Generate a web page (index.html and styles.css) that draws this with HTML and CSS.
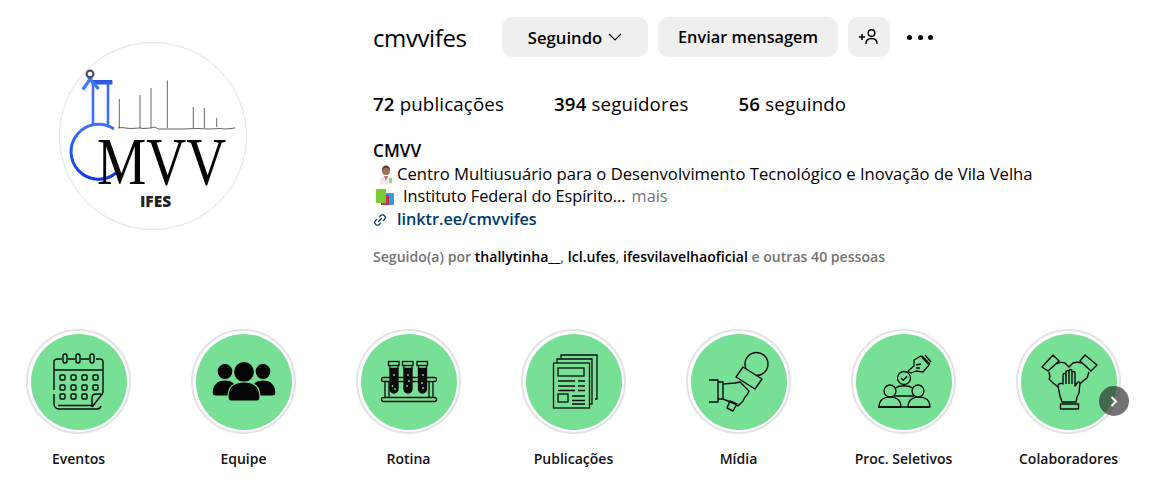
FILE: index.html
```html
<!DOCTYPE html>
<html lang="pt-BR">
<head>
<meta charset="utf-8">
<title>cmvvifes</title>
<link rel="stylesheet" href="styles.css">
</head>
<body>
<main class="page">
  <header class="profile">
    <div class="avatar-col">
      <div class="avatar">
        <svg viewBox="60 43 186 186" width="186" height="186">
          <defs><linearGradient id="fl" x1="0" y1="0" x2="0" y2="1"><stop offset="0" stop-color="#3f73f5"/><stop offset="1" stop-color="#1238e0"/></linearGradient></defs>
          <path d="M93 126V83M108 126V83" stroke="#3f6ff2" stroke-width="2.600" fill="none"/>
          <path d="M92 80.500h20v3.500H92z" fill="#2f5fe8" stroke="#2a52d8"/>
          <path d="M91.500 77L83 89.500M88.500 77l10 12" stroke="#3f7ae8" stroke-width="3.200" fill="none"/>
          <circle cx="90" cy="74" r="3.400" fill="none" stroke="#4a5068" stroke-width="2.200"/>
          <path d="M114 129A27.500 27.500 0 1 0 116 173" stroke="url(#fl)" stroke-width="3" fill="none"/>
          <path d="M118 128l4-.5 3 .5 6 .5 9-.5 3 .5 8-.5 4-1 3 2h25l14-.5 12 .5 10-.5 7 .5 9-1" stroke="#3f3f38" stroke-width=".8" fill="none"/>
          <path d="M119.300 128V99M140 128V95M151 128V88M167.300 128V80.500M193.300 128V107M204.300 128V108M216.700 127V118" stroke="#3f3f38" stroke-width=".8" fill="none"/>
          <text class="logo-mvv" transform="translate(97 184) scale(.815 1)">MVV</text>
          <text class="logo-ifes" x="155.500" y="207" text-anchor="middle">IFES</text>
        </svg>
      </div>
    </div>
    <section class="info">
      <div class="top-row">
        <h1 class="username">cmvvifes</h1>
        <button class="btn btn-follow">Seguindo
          <svg class="chev" viewBox="0 0 14 8" width="14" height="8"><path d="M1 1l6 6 6-6" fill="none" stroke="#000" stroke-width="1.200"/></svg>
        </button>
        <button class="btn btn-msg">Enviar mensagem</button>
        <button class="btn btn-add" aria-label="Adicionar">
          <svg viewBox="0 0 20 18" width="20" height="18"><path d="M0 9h6M3 6v6" stroke="#000" stroke-width="1.500"/><circle cx="12.500" cy="5" r="3.300" fill="none" stroke="#000" stroke-width="1.400"/><path d="M6.900 16c0-4 2.400-5.500 5.600-5.500s5.600 1.500 5.600 5.500" fill="none" stroke="#000" stroke-width="1.400"/></svg>
        </button>
        <div class="dots"><span></span><span></span><span></span></div>
      </div>
      <ul class="stats">
        <li><b>72</b> publicações</li>
        <li><b>394</b> seguidores</li>
        <li><b>56</b> seguindo</li>
      </ul>
      <div class="bio">
        <div class="bio-name">CMVV</div>
        <div class="bio-line">
          <svg class="emoji" viewBox="0 0 20 20" width="20" height="20"><path d="M4 20c0-6 2-8 6-8s6 2 6 8z" fill="#e9e9ee"/><path d="M8 12l2 5 2-5z" fill="#c56b7a"/><circle cx="10" cy="7" r="4" fill="#a06f58"/><path d="M5.800 7c0-4 2-5.500 4.200-5.500S14.200 3 14.200 7c-1-2.500-3-3-4.200-3S6.800 4.500 5.800 7z" fill="#5a4030"/><rect x="13" y="14" width="3" height="5" fill="#9fd46b"/></svg>
          <span>Centro Multiusuário para o Desenvolvimento Tecnológico e Inovação de Vila Velha</span>
        </div>
        <div class="bio-line bio-line-inst">
          <svg class="emoji emoji-books" viewBox="0 0 20 20" width="20" height="20"><rect x="9" y="6" width="10" height="12" rx="1" fill="#2f9be0"/><rect x="6" y="8" width="8" height="10" fill="#c0304f"/><rect x="1" y="2" width="10" height="14" rx="1" fill="#7cc832"/></svg>
          <span>Instituto Federal do Espírito...</span>
          <span class="more">mais</span>
        </div>
        <div class="bio-link">
          <svg class="link-icon" viewBox="0 0 14 14" width="14" height="14"><path d="M5.500 8.500l3-3M6.500 3.800l1.300-1.300a2.700 2.700 0 0 1 3.800 3.800L10.200 7.600M7.500 10.200l-1.300 1.300a2.700 2.700 0 0 1-3.800-3.800L3.800 6.400" fill="none" stroke="#00376b" stroke-width="1.200" stroke-linecap="round"/></svg>
          <span>linktr.ee/cmvvifes</span>
        </div>
      </div>
      <p class="followed">Seguido(a) por <b>thallytinha__</b>, <b>lcl.ufes</b>, <b>ifesvilavelhaoficial</b> e outras 40 pessoas</p>
    </section>
  </header>

  <section class="highlights">
    <div class="hl">
      <div class="ring"><div class="disc">
        <svg viewBox="0 0 96 96" width="96" height="96"><g fill="none" stroke="#0b0b0b" stroke-width="1.400">
          <path d="M31 25h-5a3 3 0 0 0-3 3v28M23 60v10a5 5 0 0 0 5 5H66a4 4 0 0 0 4-3M37 25h7M50 25h8M65 25h4a3 3 0 0 1 3 3v31M27 71.500H61"/>
          <path d="M23 36h49M72 59L61 73M72 60h-7q-4 0-4 4v9"/>
          <rect x="32" y="20" width="4" height="9" rx="2"/><rect x="45" y="20" width="4" height="9" rx="2"/><rect x="59" y="20" width="4" height="9" rx="2"/>
          <rect x="29" y="41" width="5" height="5" rx="1"/><rect x="40" y="41" width="5" height="5" rx="1"/><rect x="51" y="41" width="5" height="5" rx="1"/><rect x="62" y="41" width="5" height="5" rx="1"/>
          <rect x="29" y="51" width="5" height="5" rx="1"/><rect x="40" y="51" width="5" height="5" rx="1"/><rect x="51" y="51" width="5" height="5" rx="1"/><rect x="62" y="51" width="5" height="5" rx="1"/>
          <rect x="29" y="60" width="5" height="5" rx="1"/><rect x="40" y="60" width="5" height="5" rx="1"/><rect x="51" y="60" width="5" height="5" rx="1"/>
        </g></svg>
      </div></div>
      <span class="label">Eventos</span>
    </div>
    <div class="hl">
      <div class="ring"><div class="disc">
        <svg viewBox="0 0 96 96" width="96" height="96"><g fill="#050505" stroke="#77e096" stroke-width="1.200">
          <circle cx="29" cy="37.500" r="8"/><circle cx="67" cy="37.500" r="8"/>
          <path d="M16 59c0-8 5-13 13-13 8 0 13 5 13 13 0 2-1 3-3 3H19c-2 0-3-1-3-3z"/>
          <path d="M54 59c0-8 5-13 13-13 8 0 13 5 13 13 0 2-1 3-3 3H57c-2 0-3-1-3-3z"/>
          <circle cx="48" cy="38" r="10.500"/>
          <path d="M32 63c0-10 6-15 16-15s16 5 16 15c0 3-1 4-3 4H35c-2 0-3-1-3-4z"/>
        </g></svg>
      </div></div>
      <span class="label">Equipe</span>
    </div>
    <div class="hl">
      <div class="ring"><div class="disc">
        <svg viewBox="0 0 96 96" width="96" height="96"><g fill="none" stroke="#0b0b0b" stroke-width="1.300">
          <rect x="20.500" y="43.500" width="55" height="4" rx="2"/><rect x="20.500" y="63.500" width="55" height="4" rx="2"/>
          <path d="M24 47.500v16M28 47.500v16M68 47.500v16M72 47.500v16"/>
          <rect x="27.500" y="27.500" width="10.500" height="4"/><rect x="41.500" y="27.500" width="10.500" height="4"/><rect x="56" y="27.500" width="10.500" height="4"/>
          <path d="M29 31.500v3h8v-3M43 31.500v3h8v-3M57.500 31.500v3h8v-3" />
          <g fill="#0b0b0b"><path d="M29 35h8v20a4 4 0 0 1-8 0z"/><path d="M43 35h8v20a4 4 0 0 1-8 0z"/><path d="M57.500 35h8v20a4 4 0 0 1-8 0z"/></g>
        </g><g fill="#77e096"><circle cx="33" cy="41" r=".9"/><circle cx="31.500" cy="52" r=".9"/><circle cx="34" cy="55" r=".9"/><circle cx="47" cy="41" r=".9"/><circle cx="46" cy="52" r=".9"/><circle cx="48" cy="47" r=".9"/><circle cx="62" cy="41" r=".9"/><circle cx="61" cy="49" r=".9"/><circle cx="62" cy="54" r=".9"/></g></svg>
      </div></div>
      <span class="label">Rotina</span>
    </div>
    <div class="hl">
      <div class="ring"><div class="disc">
        <svg viewBox="0 0 96 96" width="96" height="96"><g fill="none" stroke="#0b0b0b" stroke-width="1.300">
          <path d="M35 24v-3h36v44h-2M31 29v-4h35v45h-3"/>
          <rect x="27.500" y="29" width="36" height="45" fill="#77e096"/>
          <rect x="32" y="34" width="26" height="8"/>
          <path d="M32 47h17M52 47h7M32 52h17M52 52h7M32 56.500h17M52 56.500h7M46 62h13M46 66.500h13M46 70h13"/>
          <rect x="32" y="60" width="10" height="8"/>
        </g></svg>
      </div></div>
      <span class="label">Publicações</span>
    </div>
    <div class="hl">
      <div class="ring"><div class="disc">
        <svg viewBox="0 0 96 96" width="96" height="96"><g fill="none" stroke="#0b0b0b" stroke-width="1.400" stroke-linejoin="round">
          <circle cx="65.500" cy="30" r="11.500"/>
          <path d="M52 33l19 12-7 10-19-12z" fill="#77e096"/>
          <path d="M18 46h9v22h-9M27 48h5v17h-5"/>
          <path d="M32 50l12-1 5-1 9 9-2 4-2 2-2 4-5 5-3-2-7-3-5-2"/>
          <path d="M39 67l7 3-4 7-6-3z"/>
        </g></svg>
      </div></div>
      <span class="label">Mídia</span>
    </div>
    <div class="hl">
      <div class="ring"><div class="disc">
        <svg viewBox="0 0 96 96" width="96" height="96"><g fill="none" stroke="#0b0b0b" stroke-width="1.300" stroke-linejoin="round">
          <path d="M52 37l6-5v-6l7-4 8 9-6 7-7-1-5 2-2-1z"/>
          <path d="M66 22l8 8M69 21l6 7M60 31l5-1M60 34l4 0"/>
          <circle cx="48" cy="44" r="6.500"/><path d="M45 44l2.200 2.200 4-4"/>
          <circle cx="34" cy="57" r="6"/><circle cx="62" cy="57" r="6"/>
          <path d="M39.500 54c4-3 13-3 17 0M38 62h20"/>
          <path d="M23 73c0-7 5-10 11-10s11 3 11 10zM52 73c0-7 5-10 11-10s11 3 11 10z"/>
          <path d="M22 73h52"/>
        </g></svg>
      </div></div>
      <span class="label">Proc. Seletivos</span>
    </div>
    <div class="hl">
      <div class="ring"><div class="disc">
        <svg viewBox="0 0 96 96" width="96" height="96"><g fill="none" stroke="#0b0b0b" stroke-width="1.400" stroke-linejoin="round">
          <path d="M21 33l11-12 6 6-11 10zM76 31L64 21l-5 6 11 10z"/>
          <path d="M35 30c3-2 6-2 9-1l4 4 4-4c3-1 6-1 9 0M28 38l1 5-1 2 3 3 6 5M68 38l-2 6-4 3-3 3"/>
          <path d="M42 50V41c0-2 3-2 3 0v-3c0-2 3-2 3 0v-1c0-2 3-2 3 0v2c0-2 3-2 3 0V52l2-3c1-2 3-1 3 0l-1 10-2 4-1 5H41l-2-6-2-10c0-3 4-3 5-2z"/>
          <path d="M45 41v9M48 38v12M51 39v11"/>
          <rect x="39.500" y="70" width="18" height="5"/>
        </g></svg>
      </div></div>
      <span class="label">Colaboradores</span>
    </div>
    <div class="next"><svg viewBox="0 0 8 11" width="8" height="11"><path d="M1.500 1l4.500 4.500-4.500 4.500" fill="none" stroke="#fff" stroke-width="2"/></svg></div>
  </section>
</main>
</body>
</html>
```
FILE: styles.css
```css
* { box-sizing: border-box; }
html, body { margin: 0; padding: 0; background: #fff; }
body { font-family: "Open Sans", "Noto Sans", sans-serif; color: #000; width: 1149px; height: 483px; overflow: hidden; }
.page { display: flex; flex-direction: column; }

.profile { display: flex; height: 329px; }
.avatar-col { width: 373px; padding: 42px 0 0 59px; flex: none; }
.avatar { width: 188px; height: 188px; border-radius: 50%; border: 1px solid #e2e2e2; overflow: hidden; }
.avatar svg { display: block; }
.logo-mvv { font-family: "Liberation Serif", serif; font-size: 68px; fill: #050505; }
.logo-ifes { font-family: "Open Sans", sans-serif; font-weight: 800; font-size: 15.500px; fill: #222; }

.info { flex: 1; padding-top: 17px; }
.top-row { display: flex; align-items: center; height: 40px; }
.username { margin: 0 35px 0 0; font-size: 24px; font-weight: 400; width: 94px; white-space: nowrap; letter-spacing: -.4px; }
.btn { height: 40px; border: 0; border-radius: 10px; background: #efefef; font: 600 16.300px "Open Sans", sans-serif; color: #000; display: flex; align-items: center; justify-content: center; padding: 0; margin-right: 10px; white-space: nowrap; }
.btn-follow { width: 146px; gap: 6px; font-size: 16.700px; }
.btn-msg { width: 180px; }
.btn-add { width: 42px; }
.dots { display: flex; gap: 5.500px; margin-left: 7px; }
.dots span { width: 5px; height: 5px; border-radius: 50%; background: #000; }

.stats { list-style: none; display: flex; gap: 50px; margin: 34px 0 0; padding: 0; font-size: 18.700px; letter-spacing: .15px; line-height: 26px; white-space: nowrap; }
.stats b { font-weight: 600; }

.bio { margin-top: 22px; font-size: 16.650px; line-height: 23px; white-space: nowrap; }
.bio-name { font-weight: 600; font-size: 17.200px; }
.bio-line { display: flex; align-items: center; height: 23px; }
.bio-line-inst { font-size: 16.300px; }
.emoji { margin-right: 1px; margin-left: 3px; flex: none; }
.emoji-books { margin: 0 8px 0 2px; }
.more { color: #737373; margin-left: 6px; }
.bio-link { display: flex; align-items: center; font-weight: 600; font-size: 16.200px; color: #00376b; }
.link-icon { margin-right: 10px; }
.followed { margin: 16px 0 0; font-size: 14.080px; font-weight: 600; color: #737373; line-height: 20px; white-space: nowrap; }
.followed b { font-weight: 600; color: #000; }

.highlights { position: relative; display: flex; gap: 60px; padding-left: 26px; height: 154px; overflow: hidden; }
.hl { width: 105px; flex: none; display: flex; flex-direction: column; align-items: center; }
.ring { width: 105px; height: 105px; border-radius: 50%; border: 2px solid #e3e3e3; display: flex; align-items: center; justify-content: center; flex: none; }
.disc { width: 96px; height: 96px; border-radius: 50%; background: #77e096; flex: none; }
.disc svg { display: block; }
.label { margin-top: 15px; font-size: 14px; font-weight: 600; line-height: 20px; white-space: nowrap; color: #111; }
.next { position: absolute; left: 1099px; top: 57px; width: 30px; height: 30px; border-radius: 50%; background: rgba(40,40,40,.65); display: flex; align-items: center; justify-content: center; }
```
